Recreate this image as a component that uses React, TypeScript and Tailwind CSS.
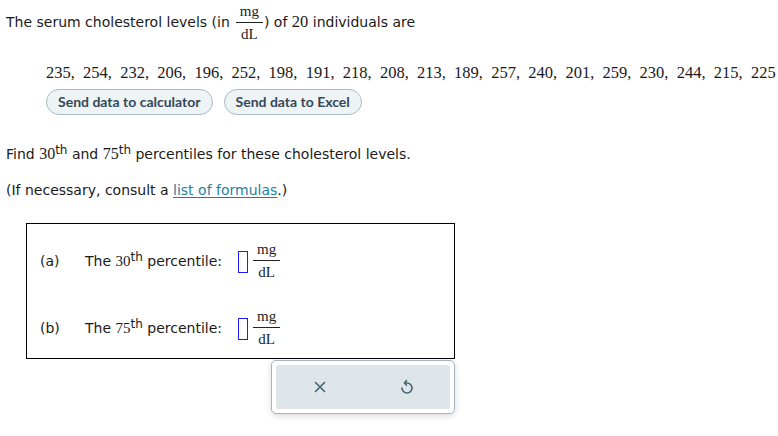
import React from "react";

const serif = "font-['Liberation_Serif','Times_New_Roman',serif]";

function Frac({ className = "" }: { className?: string }) {
  return (
    <span className={`inline-flex flex-col items-center ${serif} text-[15px] leading-none text-[#222] ${className}`}>
      <span className="px-[4px] pb-[3px]">mg</span>
      <span className="w-full border-t border-[#222]" />
      <span className="px-[4px] pt-[4px]">dL</span>
    </span>
  );
}

const nums = [235, 254, 232, 206, 196, 252, 198, 191, 218, 208, 213, 189, 257, 240, 201, 259, 230, 244, 215, 225];

export default function App() {
  return (
    <div className="font-['DejaVu_Sans',Verdana,sans-serif] text-[14px] text-[#1a1a1a] bg-white w-[778px] h-[436px] overflow-hidden px-[6px]">
      <div className="flex items-center pt-[3px]">
        <span>The serum cholesterol levels (in</span>
        <Frac className="ml-[6px] mr-[1px] mt-[1px]" />
        <span>) of <span className={`${serif} text-[16.5px]`}>20</span> individuals are</span>
      </div>
      <div className={`${serif} text-[16.5px] leading-none pl-[40px] mt-[23px] whitespace-nowrap [word-spacing:4.1px]`}>
        {nums.join(", ")}
      </div>
      <div className="flex gap-[11px] ml-[40px] mt-[7px] font-['Lato',sans-serif] font-bold text-[14px] text-[#34495a]">
        <button className="h-[26px] rounded-full border border-[#a9bbc4] bg-[#eef3f5] px-[11px]">Send data to calculator</button>
        <button className="h-[26px] rounded-full border border-[#a9bbc4] bg-[#eef3f5] px-[11px]">Send data to Excel</button>
      </div>
      <div className="mt-[29px] leading-[20px]">
        Find <span className={`${serif} text-[16px]`}>30</span>
        <sup className="text-[12px] relative top-[-5px]">th</sup> and{" "}
        <span className={`${serif} text-[16px]`}>75</span>
        <sup className="text-[12px] relative top-[-5px]">th</sup> percentiles for these cholesterol levels.
      </div>
      <div className="mt-[16px] leading-[20px]">
        (If necessary, consult a{" "}
        <span className="text-[#1f7f9f] underline underline-offset-[2px]">list of formulas</span>.)
      </div>
      <div className="ml-[20px] mt-[23px] w-[429px] h-[136px] border border-black flex flex-col pl-[13px] pt-[18px] gap-[28px]">
        {[
          { l: "(a)", n: "30" },
          { l: "(b)", n: "75" },
        ].map((r) => (
          <div key={r.l} className="flex items-center h-[39px]">
            <span className="w-[45px]">{r.l}</span>
            <span>
              The <span className={`${serif} text-[15px]`}>{r.n}</span>
              <sup className="text-[12px] relative top-[-5px]">th</sup> percentile:
            </span>
            <span className="ml-[16px] w-[10px] h-[22px] border-[1.5px] border-[#1a1aff] mt-[2px]" />
            <Frac className="ml-[5px]" />
          </div>
        ))}
      </div>
      <div className="ml-[265px] mt-[1px] w-[184px] h-[54px] rounded-[5px] border border-[#a3b5be] bg-white shadow-[0_2px_6px_rgba(0,0,0,0.15)] p-[4px]">
        <div className="w-full h-full rounded-[3px] bg-[#dde5e8] flex items-center">
          <div className="w-[86px] flex justify-center pl-[2px]">
            <svg width="14" height="14" viewBox="0 0 14 14" fill="none" stroke="#456270" strokeWidth="1.6" strokeLinecap="round">
              <path d="M2.5 2.5 L11.5 11.5 M11.5 2.5 L2.5 11.5" />
            </svg>
          </div>
          <div className="flex-1 flex justify-center pl-[2px]">
            <svg width="16" height="18" viewBox="0 0 16 18" fill="none" stroke="#456270" strokeWidth="1.6" strokeLinecap="round" strokeLinejoin="round">
              <path d="M6 5 H8 A5 5 0 1 1 3 10" />
              <path d="M7.5 2.5 L5.5 5 L7.5 7.2" />
            </svg>
          </div>
        </div>
      </div>
    </div>
  );
}
